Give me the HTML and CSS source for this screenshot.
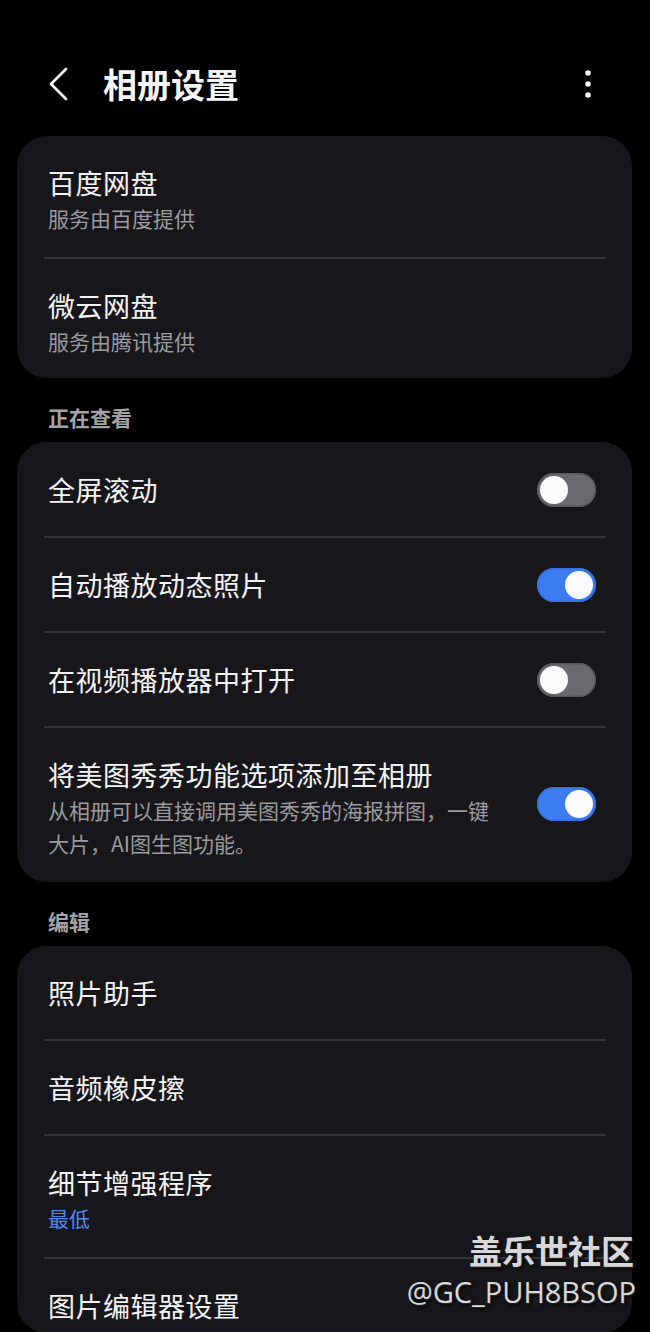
FILE: index.html
```html
<!DOCTYPE html>
<html lang="zh-CN">
<head>
<meta charset="utf-8">
<title>相册设置</title>
<link rel="stylesheet" href="styles.css">
</head>
<body>
<div class="screen">
  <header class="appbar">
    <svg class="back" width="22" height="34" viewBox="0 0 22 34"><path d="M18 2 L3 17 L18 32" fill="none" stroke="#f2f2f2" stroke-width="2.8" stroke-linecap="round" stroke-linejoin="round"/></svg>
    <h1 class="title">相册设置</h1>
    <svg class="kebab" width="8" height="30" viewBox="0 0 8 30"><circle cx="4" cy="4" r="2.8" fill="#f2f2f2"/><circle cx="4" cy="15" r="2.8" fill="#f2f2f2"/><circle cx="4" cy="26" r="2.8" fill="#f2f2f2"/></svg>
  </header>

  <section class="card">
    <div class="row">
      <div class="text">
        <div class="label">百度网盘</div>
        <div class="sub">服务由百度提供</div>
      </div>
    </div>
    <div class="row last tight">
      <div class="text">
        <div class="label">微云网盘</div>
        <div class="sub">服务由腾讯提供</div>
      </div>
    </div>
  </section>

  <div class="section-label">正在查看</div>
  <section class="card">
    <div class="row single first">
      <div class="text"><div class="label">全屏滚动</div></div>
      <span class="switch"><span class="thumb"></span></span>
    </div>
    <div class="row single">
      <div class="text"><div class="label">自动播放动态照片</div></div>
      <span class="switch on"><span class="thumb"></span></span>
    </div>
    <div class="row single">
      <div class="text"><div class="label">在视频播放器中打开</div></div>
      <span class="switch"><span class="thumb"></span></span>
    </div>
    <div class="row last">
      <div class="text">
        <div class="label">将美图秀秀功能选项添加至相册</div>
        <div class="sub">从相册可以直接调用美图秀秀的海报拼图，一键大片，AI图生图功能。</div>
      </div>
      <span class="switch on raised"><span class="thumb"></span></span>
    </div>
  </section>

  <div class="section-label">编辑</div>
  <section class="card">
    <div class="row single">
      <div class="text"><div class="label">照片助手</div></div>
    </div>
    <div class="row single">
      <div class="text"><div class="label">音频橡皮擦</div></div>
    </div>
    <div class="row">
      <div class="text">
        <div class="label">细节增强程序</div>
        <div class="sub blue">最低</div>
      </div>
    </div>
    <div class="row single cut">
      <div class="text"><div class="label">图片编辑器设置</div></div>
    </div>
  </section>

  <div class="watermark">
    <div class="wm-brand">盖乐世社区</div>
    <div class="wm-user">@GC_PUH8BSOP</div>
  </div>
</div>
</body>
</html>
```

FILE: styles.css
```css
* { box-sizing: border-box; }

html, body {
  margin: 0;
  padding: 0;
  background: #000;
}

body {
  width: 650px;
  height: 1332px;
  overflow: hidden;
  font-family: "Noto Sans CJK SC", "Noto Sans", sans-serif;
  color: #f4f4f6;
}

.screen {
  position: relative;
  width: 650px;
  height: 1332px;
  overflow: hidden;
}

.appbar {
  display: flex;
  align-items: center;
  height: 136px;
  padding: 36px 58px 4px 48px;
}

.back {
  display: block;
  flex: none;
}

.title {
  margin: 0 0 0 33px;
  font-size: 34px;
  font-weight: 700;
  line-height: 48px;
  letter-spacing: 0;
  color: #f6f6f8;
}

.kebab {
  display: block;
  margin-left: auto;
  flex: none;
}

.card {
  margin: 0 18px 0 17px;
  padding: 0 26px 0 27px;
  background: #17171b;
  border-radius: 30px;
}

.row {
  display: flex;
  align-items: center;
  gap: 24px;
  padding: 28px 10px 22px 4px;
  border-bottom: 2px solid #333338;
}

.row.single {
  padding-top: 28px;
  padding-bottom: 27px;
}

.row.single.first {
  padding-top: 29px;
}

.row.last {
  border-bottom: none;
}

.row.tight {
  padding-bottom: 20px;
}

.row.cut {
  border-bottom: none;
  padding-bottom: 8px;
}

.text {
  flex: 1;
  min-width: 0;
  max-width: 452px;
}

.label {
  font-size: 27px;
  line-height: 38px;
  letter-spacing: 0.5px;
  color: #f4f4f6;
}

.sub {
  font-size: 21px;
  line-height: 33px;
  color: #9b9b9f;
}

.sub.blue {
  color: #5686ec;
}

.section-label {
  padding: 25px 0 11px 48px;
  font-size: 21px;
  font-weight: 700;
  line-height: 28px;
  color: #a3a3a7;
}

.switch {
  position: relative;
  flex: none;
  width: 59px;
  height: 34px;
  margin-left: auto;
  border-radius: 17px;
  background: #6a6a6e;
  box-shadow: inset 0 0 0 1.5px #5a5a5e;
}

.switch .thumb {
  position: absolute;
  top: 3px;
  left: 3px;
  width: 28px;
  height: 28px;
  border-radius: 50%;
  background: #fbfbfd;
}

.switch.on {
  background: #3c7bf0;
  box-shadow: inset 0 0 0 1.5px #3470e0;
}

.switch.on .thumb {
  left: 28px;
}

.switch.raised {
  align-self: flex-start;
  margin-top: 31px;
}

.watermark {
  position: absolute;
  right: 16px;
  top: 1228px;
  text-align: right;
  color: #d8d8da;
  text-shadow: 1px 1px 1px #2a2a2a, 2px 2px 3px #000;
}

.wm-brand {
  font-family: "Noto Sans CJK SC", sans-serif;
  font-size: 33px;
  font-weight: 700;
  line-height: 44px;
}

.wm-user {
  font-family: "Open Sans", "Liberation Sans", sans-serif;
  font-size: 29px;
  line-height: 40px;
  margin-right: -2px;
}
```
